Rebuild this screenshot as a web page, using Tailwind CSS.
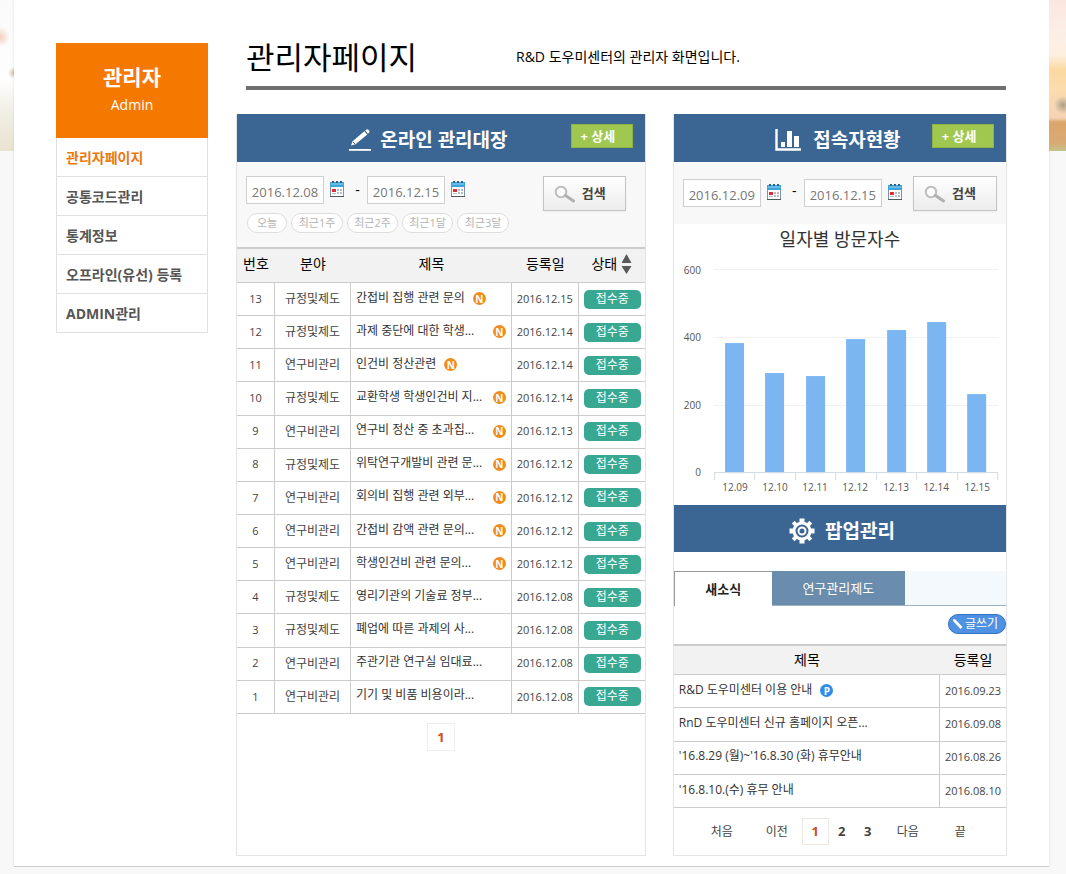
<!DOCTYPE html>
<html lang="ko">
<head>
<meta charset="utf-8">
<title>관리자페이지</title>
<script src="https://cdn.jsdelivr.net/npm/@tailwindcss/browser@4"></script>
</head>
<body class="bg-[#f8f8f8] font-['Open_Sans','Noto_Sans_CJK_KR',sans-serif] text-black">
<svg class="hidden">
  <symbol id="cal" viewBox="0 0 14 16">
    <rect x="0.5" y="2.5" width="13" height="13" fill="#fff" stroke="#8493a3"/>
    <path d="M0 15.500h14" stroke="#4d5a66"/>
    <rect x="0" y="1" width="14" height="5" fill="#3ea4dc"/>
    <path d="M2 0h2v2H2zM6 0h2v2H6zM10 0h2v2h-2z" fill="#2b6288"/>
    <path d="M1 3h12" stroke="#8fd2f3"/>
    <path d="M7 8h2v2H7zM10 8h2v2h-2zM7 11h2v2H7zM10 11h2v2h-2zM2 12h4v1H2z" fill="#b3bcc6"/>
    <rect x="2" y="8" width="4" height="3" fill="#e02d35"/>
  </symbol>
  <symbol id="mag" viewBox="0 0 22 18">
    <circle cx="7" cy="7" r="5.2" fill="#fdfdfd" stroke="#bdbdbd" stroke-width="2"/>
    <path d="M11.5 10.5l8 5.5" stroke="#b0b0b0" stroke-width="3" stroke-linecap="round"/>
  </symbol>
</svg>
<div class="grid grid-cols-[14px_1fr_17px]">
  <div class="h-[151px] bg-[radial-gradient(circle_at_0px_37px,#f6cdbd_0px,#f6cdbd00_10px),radial-gradient(circle_at_14px_73px,#d9b8a4_0px,#d9b8a400_6px),linear-gradient(#fafafa_0px,#fefefe_80px,#f1efe6_110px,#ebe3d2_150px)]"></div>
  <div class="flex items-start border-b border-[#cccccc] bg-white pt-[43px] pr-[42px] pb-[10px] pl-[42px] shadow-sm">
    <aside class="w-[152px] shrink-0">
      <div class="flex h-[95px] flex-col items-center bg-[#f57800] pt-5 text-white">
        <h2 class="text-[21px] leading-7 font-bold">관리자</h2>
        <p class="text-sm leading-7">Admin</p>
      </div>
      <nav class="border-x border-[#e0e0e0] text-sm font-bold text-[#555555]">
        <a href="#" class="flex h-[39px] items-center border-b border-[#e0e0e0] px-[9px] pt-[2px] text-[#e9790f]">관리자페이지</a>
        <a href="#" class="flex h-[39px] items-center border-b border-[#e0e0e0] px-[9px] pt-[2px]">공통코드관리</a>
        <a href="#" class="flex h-[39px] items-center border-b border-[#e0e0e0] px-[9px] pt-[2px]">통계정보</a>
        <a href="#" class="flex h-[39px] items-center border-b border-[#e0e0e0] px-[9px] pt-[2px]">오프라인(유선) 등록</a>
        <a href="#" class="flex h-[39px] items-center border-b border-[#e0e0e0] px-[9px] pt-[2px]">ADMIN관리</a>
      </nav>
    </aside>
    <main class="ml-7 min-w-0 flex-1">
      <header class="mr-px ml-[10px] flex h-[47px] items-center border-b-4 border-[#707070] pb-4">
        <h1 class="w-[270px] shrink-0 text-[31px] leading-8">관리자페이지</h1>
        <p class="text-sm">R&amp;D 도우미센터의 관리자 화면입니다.</p>
      </header>
      <div class="mt-6 flex gap-[27px]">
        <section class="min-w-0 flex-[410] border border-t-0 border-[#e4e4e4]">
          <div class="grid h-12 grid-cols-[1fr_auto_1fr] items-center bg-[#3b6694] pr-3 text-white">
            <span></span>
            <h2 class="flex items-center gap-2 pt-1 pr-[14px] text-[19px] leading-6 font-bold">
              <svg class="h-6 w-6" viewBox="0 0 24 24"><path d="M1 21h22v1.800H1z" fill="#fff"/><path d="M3 17.500l1.600-4.200L16.300 3.200l3 3.200L7.500 16.300z" fill="#fff"/><path d="M17.200 2.500l1.300-1.100q1-.6 1.800.3l1 1.100q.7.900-.2 1.700L20 5.700z" fill="#fff"/><path d="M4.800 13.800l2.200 2.200" stroke="#3b6694"/></svg>
              온라인 관리대장
            </h2>
            <button class="mb-1 h-6 w-[62px] justify-self-end border border-[#8fb53f] bg-[#a0c850] pr-2 text-[13px] leading-5 font-bold">+ 상세</button>
          </div>
          <div class="h-[85px] bg-[#f8f8f8] px-[9px] pt-[14px]">
            <div class="flex items-start">
              <input aria-label="시작일" value="2016.12.08" class="h-7 w-[78px] border border-[#cfcfcf] bg-white pt-[3px] text-center text-[13px] text-[#777777]">
              <button aria-label="시작일 달력" class="ml-[6px] pt-[5px]"><svg class="h-4 w-[14px]"><use href="#cal"/></svg></button>
              <span class="w-[23px] pl-1 text-center text-sm leading-7">-</span>
              <input aria-label="종료일" value="2016.12.15" class="h-7 w-[78px] border border-[#cfcfcf] bg-white pt-[3px] text-center text-[13px] text-[#777777]">
              <button aria-label="종료일 달력" class="ml-[6px] pt-[5px]"><svg class="h-4 w-[14px]"><use href="#cal"/></svg></button>
              <button class="mr-[10px] ml-auto flex h-[35px] w-[83px] items-center gap-[6px] border border-[#c4c4c4] bg-linear-to-b from-white to-[#ececec] pl-[10px] text-[13px] font-bold text-[#444444] shadow-xs"><svg class="h-[18px] w-[22px]"><use href="#mag"/></svg>검색</button>
            </div>
            <div class="mt-[2px] ml-px flex gap-1 text-[11px] leading-4 text-[#b4b4b4]">
              <button class="h-5 w-10 rounded-full border border-[#dddddd] bg-white">오늘</button>
              <button class="h-5 w-[52px] rounded-full border border-[#dddddd] bg-white">최근1주</button>
              <button class="h-5 w-[51px] rounded-full border border-[#dddddd] bg-white">최근2주</button>
              <button class="h-5 w-[51px] rounded-full border border-[#dddddd] bg-white">최근1달</button>
              <button class="h-5 w-[52px] rounded-full border border-[#dddddd] bg-white">최근3달</button>
            </div>
          </div>
          <table class="h-[467px] w-full table-fixed border-separate border-spacing-0">
            <colgroup><col class="w-[38px]"><col class="w-[76px]"><col><col class="w-[67px]"><col class="w-[66px]"></colgroup>
            <thead>
              <tr class="h-9 bg-[#f2f2f2] text-sm leading-5">
                <th class="border-t-2 border-b border-[#cccccc] p-0 pb-1 font-normal">번호</th>
                <th class="border-t-2 border-b border-[#cccccc] p-0 pb-1 font-normal">분야</th>
                <th class="border-t-2 border-b border-[#cccccc] p-0 pb-1 font-normal">제목</th>
                <th class="border-t-2 border-b border-[#cccccc] p-0 pb-1 font-normal">등록일</th>
                <th class="border-t-2 border-b border-[#cccccc] p-0 pb-1 font-normal"><button class="inline-flex items-center gap-1">상태<svg class="h-5 w-[11px]" viewBox="0 0 11 20"><path d="M5.500 0L10.500 9H.500zM5.500 20L10.500 12H.500z" fill="#595959"/></svg></button></th>
              </tr>
            </thead>
            <tbody id="ledger" class="text-center text-xs text-[#444444]"></tbody>
          </table>
          <nav class="flex h-[141px] justify-center pt-[9px]">
            <a href="#" class="flex h-7 w-7 items-center justify-center border border-[#eeeeee] pt-px text-[13px] font-bold text-[#d04a24]">1</a>
          </nav>
        </section>
        <section class="min-w-0 flex-[334] border border-t-0 border-[#e4e4e4]">
          <div class="grid h-12 grid-cols-[1fr_auto_1fr] items-center bg-[#3b6694] pr-3 text-white">
            <span></span>
            <h2 class="flex items-center gap-[11px] pt-1 pl-[8px] text-[19px] leading-6 font-bold">
              <svg class="h-6 w-[27px]" viewBox="0 0 27 24"><path d="M1.500 1v20.500H26" fill="none" stroke="#fff" stroke-width="2.400"/><path d="M6 14h4v5H6zM12 3h5v16h-5zM19 8h5v11h-5z" fill="#fff"/></svg>
              접속자현황
            </h2>
            <button class="mb-1 h-6 w-[62px] justify-self-end border border-[#8fb53f] bg-[#a0c850] pr-2 text-[13px] leading-5 font-bold">+ 상세</button>
          </div>
          <div class="flex h-[62px] items-start bg-[#f8f8f8] px-[9px] pt-[14px]">
            <input aria-label="시작일" value="2016.12.09" class="mt-[3px] h-7 w-[78px] border border-[#cfcfcf] bg-white pt-[3px] text-center text-[13px] text-[#777777]">
            <button aria-label="시작일 달력" class="ml-[6px] pt-2"><svg class="h-4 w-[14px]"><use href="#cal"/></svg></button>
            <span class="w-[23px] pt-[3px] pl-1 text-center text-sm leading-6">-</span>
            <input aria-label="종료일" value="2016.12.15" class="mt-[3px] h-7 w-[78px] border border-[#cfcfcf] bg-white pt-[3px] text-center text-[13px] text-[#777777]">
            <button aria-label="종료일 달력" class="ml-[6px] pt-2"><svg class="h-4 w-[14px]"><use href="#cal"/></svg></button>
            <button class="ml-auto flex h-[35px] w-[84px] items-center gap-[6px] border border-[#c4c4c4] bg-linear-to-b from-white to-[#ececec] pl-[10px] text-[13px] font-bold text-[#444444] shadow-xs"><svg class="h-[18px] w-[22px]"><use href="#mag"/></svg>검색</button>
          </div>
          <h3 class="pt-px text-center text-lg leading-7 text-[#333333]">일자별 방문자수</h3>
          <svg class="block w-full" viewBox="0 -1 332 252">
            <path d="M40 15.500h284M40 83.500h284M40 151.500h284" stroke="#f1f1f1"/>
            <g fill="#7cb6f2">
              <rect x="51" y="89" width="19" height="130"/><rect x="91" y="119" width="19" height="100"/><rect x="132" y="122" width="19" height="97"/><rect x="172" y="85" width="19" height="134"/><rect x="213" y="76" width="19" height="143"/><rect x="253" y="68" width="19" height="151"/><rect x="293" y="140" width="19" height="79"/>
            </g>
            <path d="M40 218.500h284M40.500 218v8M80.500 218v8M121.500 218v8M161.500 218v8M202.500 218v8M242.500 218v8M283.500 218v8M323.500 218v8" stroke="#d3dce6" fill="none"/>
            <g class="fill-[#555555] text-[10px]" text-anchor="end"><text x="27" y="20">600</text><text x="27" y="87">400</text><text x="27" y="155">200</text><text x="27" y="222">0</text></g>
            <g class="fill-[#555555] text-[10px]" text-anchor="middle"><text x="61" y="237">12.09</text><text x="101" y="237">12.10</text><text x="141" y="237">12.11</text><text x="181" y="237">12.12</text><text x="222" y="237">12.13</text><text x="262" y="237">12.14</text><text x="303" y="237">12.15</text></g>
          </svg>
          <div class="flex h-[47px] items-center justify-center gap-[10px] bg-[#3b6694] pt-1 pl-1 text-[19px] leading-6 font-bold text-white">
            <svg class="h-[26px] w-[26px]" viewBox="0 0 26 26" fill="none" stroke="#fff"><circle cx="13" cy="13" r="8" stroke-width="3"/><circle cx="13" cy="13" r="3.500" stroke-width="2"/><g stroke-width="5"><path d="M13 .500v4M13 21.500v4M.500 13h4M21.500 13h4"/></g><g stroke-width="4"><path d="M4.200 4.200l2.600 2.600M19.200 19.200l2.600 2.600M4.200 21.800l2.600-2.600M19.200 6.800l2.600-2.600"/></g></svg>
            <h2>팝업관리</h2>
          </div>
          <div class="mt-[19px] flex h-[35px] border-b border-[#9fb0bf] bg-[#f4f9fd] text-[13px]">
            <button class="-mb-px w-[98px] border-t border-l border-[#999999] bg-white pt-[2px] font-bold text-[#222222]">새소식</button>
            <button class="w-[133px] bg-[#6a8cad] pt-[2px] text-white">연구관리제도</button>
          </div>
          <div class="flex h-[38px] justify-end pt-2">
            <button class="flex h-5 w-[58px] items-center gap-px rounded-full border border-[#2f72c4] bg-[#4f92e3] pl-[3px] text-xs text-white"><svg class="h-3 w-3" viewBox="0 0 12 12"><path d="M1 1l2.500.500 7 7.500-2 2-7-7.500z" fill="#fff"/></svg>글쓰기</button>
          </div>
          <table class="h-[164px] w-full table-fixed border-separate border-spacing-0">
            <colgroup><col><col class="w-[66px]"></colgroup>
            <thead>
              <tr class="h-[31px] bg-[#f2f2f2] text-sm leading-5">
                <th class="border-t-2 border-b border-[#cccccc] p-0 font-normal">제목</th>
                <th class="border-t-2 border-b border-[#cccccc] p-0 font-normal">등록일</th>
              </tr>
            </thead>
            <tbody id="news" class="text-xs text-[#444444]"></tbody>
          </table>
          <nav class="flex h-[46px] items-center pt-px text-xs text-[#444444]">
            <a href="#" class="ml-[37px] w-[55px]">처음</a><a href="#" class="w-9">이전</a>
            <a href="#" class="flex h-[27px] w-[27px] items-center justify-center border border-[#f0e6e2] text-[13px] font-bold text-[#d04a24]">1</a>
            <a href="#" class="w-[26px] text-center text-[13px] font-bold">2</a>
            <a href="#" class="w-[26px] text-center text-[13px] font-bold">3</a>
            <a href="#" class="ml-4 w-[58px]">다음</a><a href="#">끝</a>
          </nav>
        </section>
      </div>
    </main>
  </div>
  <div class="h-[151px] bg-[radial-gradient(circle_at_14px_105px,#aaa08c_0px,#aaa08c00_9px),linear-gradient(#fbe6e0_0px,#fbeee6_30px,#fdf0e0_55px,#fbd9a0_70px,#fbdcae_90px,#f5d3b4_118px,#dca66c_122px,#d9a974_143px,#c3c489_151px)]"></div>
</div>
<script>
const A = '규정및제도', B = '연구비관리';
// number, category, title, date, new flag
const ledger = [
  [13, A, '간접비 집행 관련 문의', '2016.12.15', 1],
  [12, A, '과제 중단에 대한 학생...', '2016.12.14', 1],
  [11, B, '인건비 정산관련', '2016.12.14', 1],
  [10, A, '교환학생 학생인건비 지...', '2016.12.14', 1],
  [9, B, '연구비 정산 중 초과집...', '2016.12.13', 1],
  [8, A, '위탁연구개발비 관련 문...', '2016.12.12', 1],
  [7, B, '회의비 집행 관련 외부...', '2016.12.12', 1],
  [6, B, '간접비 감액 관련 문의...', '2016.12.12', 1],
  [5, B, '학생인건비 관련 문의...', '2016.12.12', 1],
  [4, A, '영리기관의 기술료 정부...', '2016.12.08', 0],
  [3, A, '폐업에 따른 과제의 사...', '2016.12.08', 0],
  [2, B, '주관기관 연구실 임대료...', '2016.12.08', 0],
  [1, B, '기기 및 비품 비용이라...', '2016.12.08', 0],
];
document.getElementById('ledger').innerHTML = ledger.map(([n, cat, title, date, isNew]) => `
  <tr class="h-[33px]">
    <td class="border-r border-b border-[#cccccc] p-0 text-[11px]">${n}</td>
    <td class="border-r border-b border-[#cccccc] p-0">${cat}</td>
    <td class="border-r border-b border-[#cccccc] p-0 px-[5px] pb-[3px] text-left">
      <div class="flex items-center ${title.endsWith('...') ? 'justify-between' : 'gap-2'}"><a href="#" class="whitespace-nowrap text-[#333333]">${title}</a>${isNew ? '<span class="mt-[2px] flex h-[13px] w-[13px] shrink-0 items-center justify-center rounded-full bg-[#f08c1e] text-[10px] leading-3 font-bold text-white">N</span>' : ''}</div>
    </td>
    <td class="border-r border-b border-[#cccccc] p-0 text-[11px]">${date}</td>
    <td class="border-b border-[#cccccc] p-0 pl-px"><span class="mx-auto block h-[19px] w-[57px] rounded-[5px] bg-[#38a893] text-xs leading-[18px] text-white">접수중</span></td>
  </tr>`).join('');
const news = [
  ['R&amp;D 도우미센터 이용 안내', '2016.09.23', 1],
  ['RnD 도우미센터 신규 홈페이지 오픈...', '2016.09.08', 0],
  ["'16.8.29 (월)~'16.8.30 (화) 휴무안내", '2016.08.26', 0],
  ["'16.8.10.(수) 휴무 안내", '2016.08.10', 0],
];
document.getElementById('news').innerHTML = news.map(([title, date, popup]) => `
  <tr class="h-[33px]">
    <td class="border-r border-b border-[#cccccc] p-0 px-[5px] pb-[3px]">
      <div class="flex items-center gap-2"><a href="#" class="whitespace-nowrap text-[#333333]">${title}</a>${popup ? '<span class="mt-[2px] flex h-[13px] w-[13px] items-center justify-center rounded-full bg-[#2e8de6] text-[10px] leading-3 font-bold text-white">P</span>' : ''}</div>
    </td>
    <td class="border-b border-[#cccccc] p-0 text-center text-[11px]">${date}</td>
  </tr>`).join('');
</script>
</body>
</html>
